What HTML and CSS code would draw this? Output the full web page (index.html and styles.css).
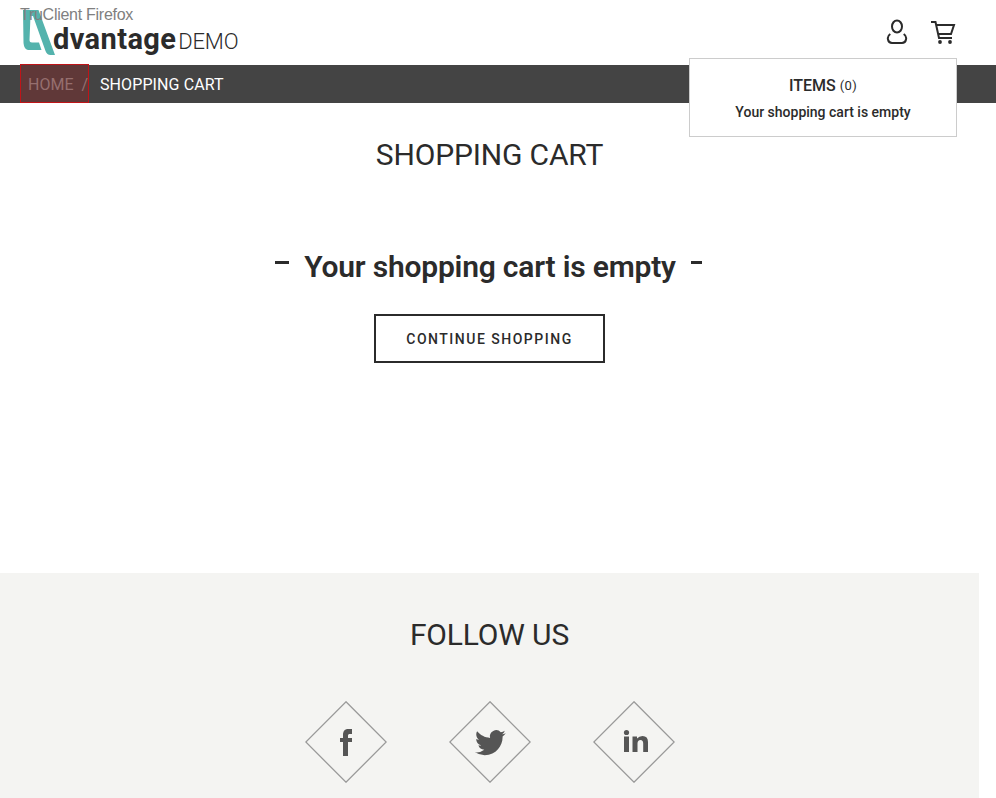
FILE: index.html
```html
<!DOCTYPE html>
<html lang="en">
<head>
<meta charset="utf-8">
<title>Advantage DEMO - Shopping Cart</title>
<link rel="stylesheet" href="styles.css">
</head>
<body>
<header class="header">
  <a class="logo">
    <svg class="logo-mark" width="34" height="47" viewBox="0 0 34 47">
      <path fill="#54b3ad" d="M2 1H17.500L34 46H29.500Q26 46 24.500 42L12 7H9.500L8.500 31Q8.500 33.500 11 33.500H18L20.500 41H7Q3 40 2.500 34Z"/>
    </svg>
    <span class="logo-name">dvantage</span><span class="logo-demo">DEMO</span>
  </a>
  <span class="client-label">TruClient Firefox</span>
  <nav class="tools">
    <svg width="22" height="26" viewBox="0 0 22 26" fill="none" stroke="#2b2b2b" stroke-width="2">
      <ellipse cx="11" cy="7.500" rx="5" ry="6"/>
      <path d="M4.300 15C2 16.500 1.500 18.500 2 20.500C2.500 23 4 24 6 24H16C18 24 19.500 23 20 20.500C20.500 18.500 20 16.500 17.700 15"/>
    </svg>
    <svg width="26" height="26" viewBox="0 0 26 26" fill="none" stroke="#2b2b2b" stroke-width="2">
      <path d="M1 3H5.500L9 19H22M6 6H24L21 15H8.500"/>
      <circle cx="10" cy="23" r="1.900" fill="#2b2b2b" stroke="none"/><circle cx="20" cy="23" r="1.900" fill="#2b2b2b" stroke="none"/>
    </svg>
  </nav>
  <div class="cart-menu">
    <p class="cart-items">ITEMS <span class="cart-count">(0)</span></p>
    <p class="cart-empty">Your shopping cart is empty</p>
  </div>
</header>
<nav class="crumbs">
  <a class="crumb-home">HOME<span class="slash">/</span></a>
  <span class="crumb-current">SHOPPING CART</span>
</nav>
<main class="main">
  <h1 class="title">SHOPPING CART</h1>
  <div class="empty">
    <span class="dash dash-left"></span>
    <span class="empty-text">Your shopping cart is empty</span>
    <span class="dash dash-right"></span>
  </div>
  <a class="button">CONTINUE SHOPPING</a>
</main>
<footer class="follow">
  <h2 class="title">FOLLOW US</h2>
  <div class="social">
    <svg width="82" height="82" viewBox="0 0 82 82">
      <path class="diamond" d="M41 .800L81.200 41L41 81.200L.800 41Z"/>
      <path class="glyph" d="M38 55V41H35V37H38V34C38 30 40 28 43 28H47V33H45C43.500 33 43 33.500 43 35V37H47V41H43V55Z"/>
    </svg>
    <svg width="82" height="82" viewBox="0 0 82 82">
      <path class="diamond" d="M41 .800L81.200 41L41 81.200L.800 41Z"/>
      <path class="glyph" transform="translate(26 26.300) scale(1.280)" d="M23.953 4.570a10 10 0 01-2.825.775 4.958 4.958 0 002.163-2.723c-.951.555-2.005.959-3.127 1.184a4.920 4.920 0 00-8.384 4.482C7.690 8.095 4.067 6.130 1.640 3.162a4.822 4.822 0 00-.666 2.475c0 1.710.870 3.213 2.188 4.096a4.904 4.904 0 01-2.228-.616v.060a4.923 4.923 0 003.946 4.827 4.996 4.996 0 01-2.212.085 4.936 4.936 0 004.604 3.417 9.867 9.867 0 01-6.102 2.105c-.390 0-.779-.023-1.170-.067a13.995 13.995 0 007.557 2.209c9.053 0 13.998-7.496 13.998-13.985 0-.210 0-.420-.015-.630A9.935 9.935 0 0024 4.590z"/>
    </svg>
    <svg width="82" height="82" viewBox="0 0 82 82">
      <path class="diamond" d="M41 .800L81.200 41L41 81.200L.800 41Z"/>
      <circle class="glyph" cx="33.500" cy="31.500" r="2.600"/>
      <path class="glyph" d="M31 35.500H36V51H31ZM39.500 35.500H44V37.500Q46 35 49.500 35Q55 35 55 41V51H50.200V42.500Q50.200 39 47.500 39Q44.500 39 44.500 42.500V51H39.500Z"/>
    </svg>
  </div>
</footer>
</body>
</html>
```

FILE: styles.css
```css
* { box-sizing: border-box; }
body { margin: 0; height: 798px; overflow: hidden; background: #fff; color: #2b2b2b; font-family: Roboto, "Liberation Sans", sans-serif; }
p, h1, h2 { margin: 0; }
svg { display: block; flex: none; }

.header { position: relative; display: flex; justify-content: space-between; height: 65px; padding: 0 40px 0 21px; }
.logo { display: flex; align-items: flex-start; padding-top: 9px; white-space: nowrap; }
.logo-name { margin: 12px 0 0 -2px; font-size: 29px; line-height: 36px; font-weight: 700; letter-spacing: 0.4px; }
.logo-demo { margin: 15px 0 0 2px; font-size: 22px; line-height: 36px; font-weight: 300; letter-spacing: -0.2px; }
.client-label { position: absolute; left: 20px; top: 5px; font: 16px/20px "Liberation Sans", sans-serif; letter-spacing: -0.27px; color: #808080; white-space: nowrap; }
.tools { display: flex; gap: 22px; padding-top: 19px; }

.cart-menu { position: absolute; z-index: 2; left: 689px; top: 58px; width: 268px; height: 79px; padding-top: 17px; background: #fff; border: 1px solid #ccc; text-align: center; }
.cart-items { font-size: 16px; line-height: 20px; font-weight: 500; }
.cart-count { position: relative; top: -1px; font-size: 13px; font-weight: 400; letter-spacing: 0.4px; }
.cart-empty { margin-top: 5px; font-size: 14px; line-height: 20px; font-weight: 500; }

.crumbs { display: flex; height: 38px; padding-left: 20px; background: #444; color: #fff; font-size: 16px; line-height: 39px; }
.crumb-home { display: flex; width: 69px; height: 39px; margin-top: -1px; padding-left: 7px; border: 1px solid #c01418; background: #603838; color: #966f6f; }
.slash { margin-left: 8px; }
.crumb-current { margin-left: 11px; letter-spacing: 0.1px; }

.main { display: flex; flex-direction: column; align-items: center; width: 979px; height: 470px; padding-top: 33px; }
.title { font-size: 30px; line-height: 38px; font-weight: 400; letter-spacing: -0.15px; text-align: center; }
.empty { display: flex; align-items: center; margin: 74px 2px 0 0; }
.empty-text { font-size: 30px; line-height: 38px; font-weight: 600; letter-spacing: -0.2px; }
.dash { height: 3px; margin-bottom: 9px; background: #2b2b2b; }
.dash-left { width: 14px; margin-right: 15px; }
.dash-right { width: 11px; margin-left: 15px; }
.button { width: 231px; height: 49px; margin-top: 28px; border: 2px solid #2b2b2b; font-size: 14px; line-height: 46px; font-weight: 500; letter-spacing: 1.5px; text-align: center; }

.follow { width: 979px; height: 225px; padding-top: 43px; background: #f4f4f2; }
.social { display: flex; justify-content: center; gap: 62px; margin-top: 47px; }
.diamond { fill: none; stroke: #999; stroke-width: 1.3; }
.glyph { fill: #555; }
```
